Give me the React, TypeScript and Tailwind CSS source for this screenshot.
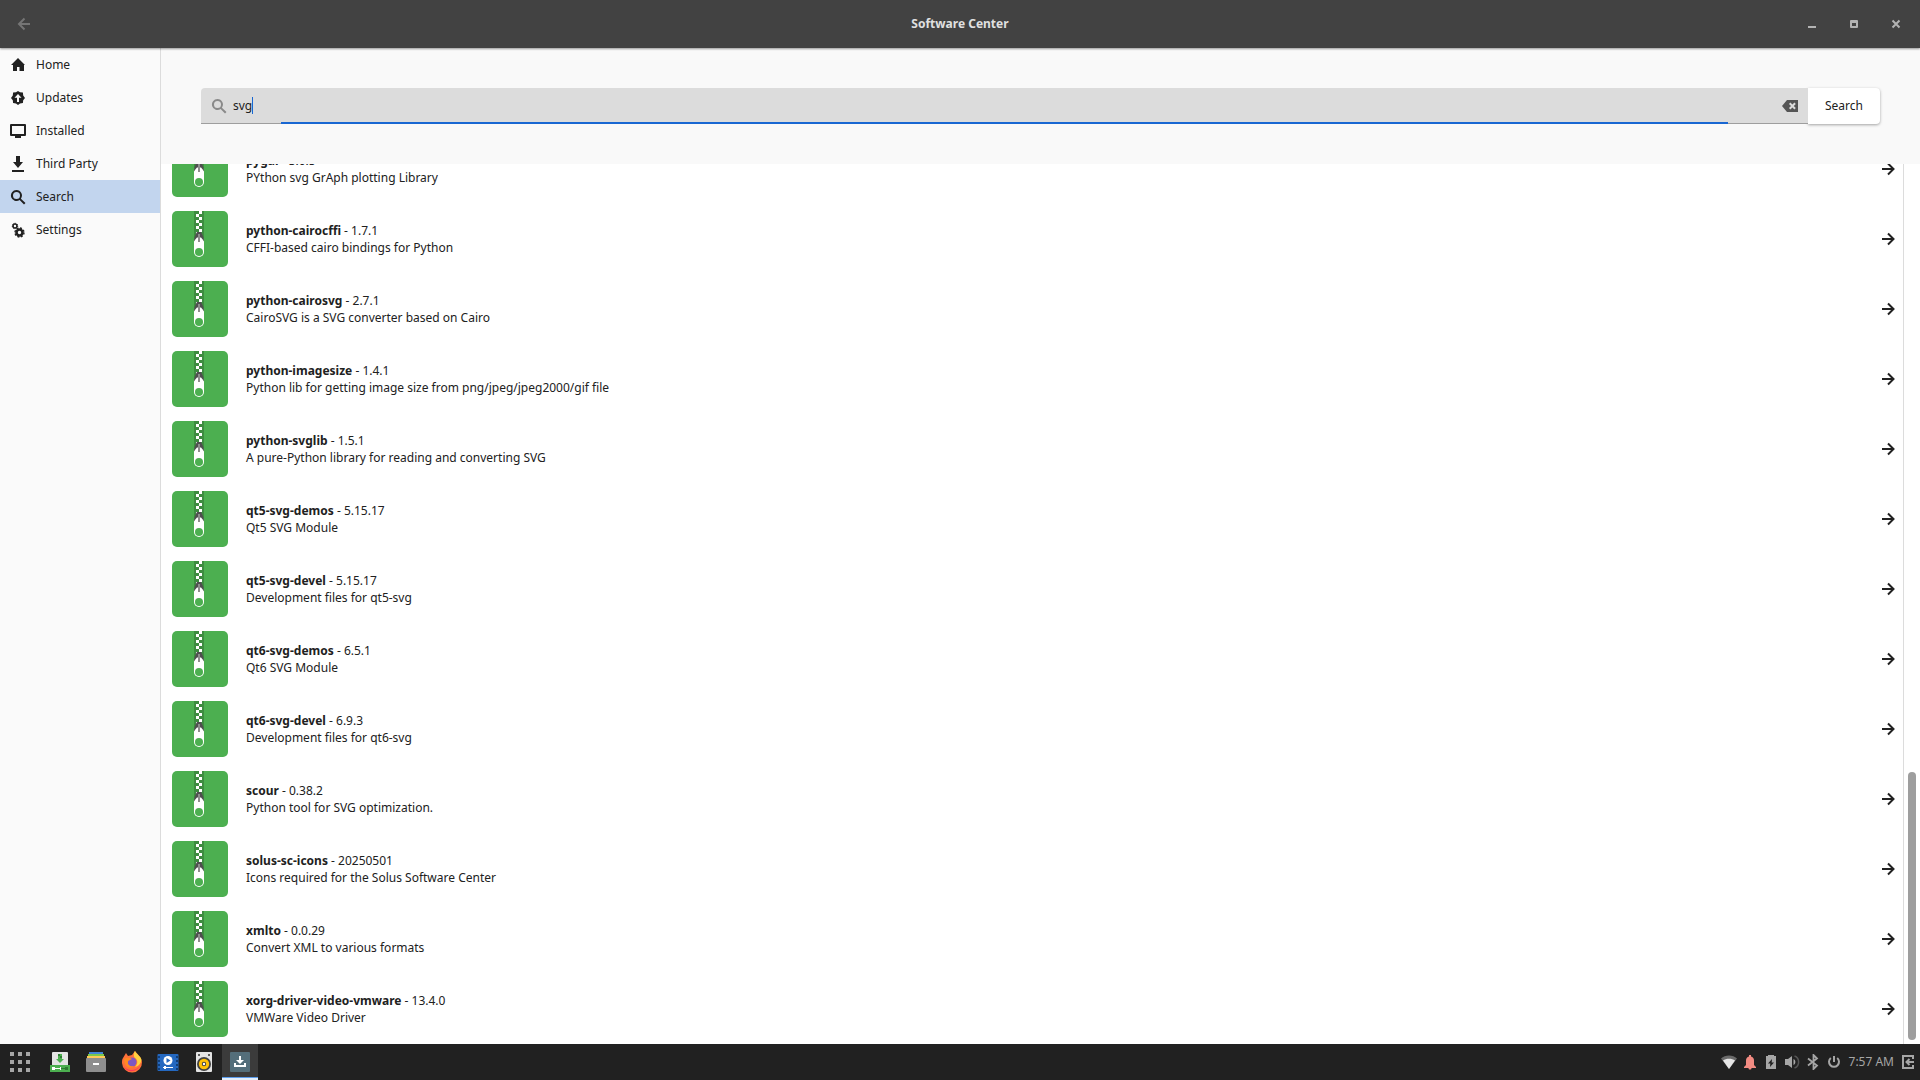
import { useState } from "react";
import type { ReactNode } from "react";

const NAV: { label: string; icon: ReactNode }[] = [
  { label: "Home", icon: <path d="M8 1 1 8h2v6h4v-4h2.5v4H14V8h1z" /> },
  {
    label: "Updates",
    icon: (
      <>
        <path d="M8 1l2 1.3 2.9.3.3 2.8L15 8l-1.8 2.3-.3 2.6-2.9.5L8 15l-2-1.6-2.9-.5-.3-2.6L1 8l1.8-2.6.3-2.8L6 2.3z" />
        <path d="M8 4 4.5 7.8H7V12h2V7.8h2.5z" fill="#fafafa" />
      </>
    ),
  },
  {
    label: "Installed",
    icon: <path fillRule="evenodd" d="M1 1h14a1 1 0 0 1 1 1v10a1 1 0 0 1-1 1h-4v2H5v-2H1a1 1 0 0 1-1-1V2a1 1 0 0 1 1-1zm1 2v8h12V3z" />,
  },
  { label: "Third Party", icon: <path d="M6 0h4v6h3l-5 6-5-6h3zM2 14h12v2H2z" /> },
  {
    label: "Search",
    icon: <path fillRule="evenodd" d="M6.5 1a5.500 5.500 0 0 1 4.400 8.700L15.500 14 14 15.500 9.600 11A5.500 5.500 0 1 1 6.500 1zm0 2a3.500 3.500 0 1 0 0 7 3.500 3.500 0 0 0 0-7z" />,
  },
  {
    label: "Settings",
    icon: (
      <>
        <circle cx="5" cy="4" r="2" fill="none" stroke="currentColor" strokeWidth="1.6" />
        <circle cx="5" cy="4" r="2.7" fill="none" stroke="currentColor" strokeDasharray="1.2 1.2" />
        <circle cx="9.5" cy="10.5" r="3" fill="none" stroke="currentColor" strokeWidth="2.6" />
        <circle cx="9.5" cy="10.5" r="4.5" fill="none" stroke="currentColor" strokeWidth="1.4" strokeDasharray="2 1.53" />
      </>
    ),
  },
];

const PACKAGES = [
  ["pygal", "3.0.5", "PYthon svg GrAph plotting Library"],
  ["python-cairocffi", "1.7.1", "CFFI-based cairo bindings for Python"],
  ["python-cairosvg", "2.7.1", "CairoSVG is a SVG converter based on Cairo"],
  ["python-imagesize", "1.4.1", "Python lib for getting image size from png/jpeg/jpeg2000/gif file"],
  ["python-svglib", "1.5.1", "A pure-Python library for reading and converting SVG"],
  ["qt5-svg-demos", "5.15.17", "Qt5 SVG Module"],
  ["qt5-svg-devel", "5.15.17", "Development files for qt5-svg"],
  ["qt6-svg-demos", "6.5.1", "Qt6 SVG Module"],
  ["qt6-svg-devel", "6.9.3", "Development files for qt6-svg"],
  ["scour", "0.38.2", "Python tool for SVG optimization."],
  ["solus-sc-icons", "20250501", "Icons required for the Solus Software Center"],
  ["xmlto", "0.0.29", "Convert XML to various formats"],
  ["xorg-driver-video-vmware", "13.4.0", "VMWare Video Driver"],
];

function PackageIcon() {
  return (
    <svg viewBox="0 0 56 56" className="size-14 shrink-0">
      <rect width="56" height="56" rx="5" fill="#4caf50" />
      <path d="M22 0h10v27H22z" fill="#3d8c40" />
      <path
        d="M27 0h3v3h-3zM24 3h3v3h-3zM27 6h3v3h-3zM24 9h3v3h-3zM27 12h3v3h-3zM24 15h3v3h-3zM27 18h3v3h-3zM24 21h3v2h-3z"
        fill="#fff"
      />
      <path d="M24 26h6l2 4v11a5 5 0 0 1-10 0V30z" fill="#fff" />
      <path d="M25 21h4c1.5 3 3 5 3 9.5-1-1.5-2-3-3-4h-4c-1 1-2 2.5-3 4 0-4.5 1.5-6.5 3-9.5z" fill="#4f4f4f" />
      <path d="M26 23h2v8h-2z" fill="#8e8e8e" />
      <circle cx="27" cy="41" r="4" fill="#4caf50" />
    </svg>
  );
}

const LAUNCHERS: { label: string; icon: ReactNode }[] = [
  {
    label: "Installer",
    icon: (
      <>
        <path d="M3 0h14a1 1 0 0 1 1 1v13H2V1a1 1 0 0 1 1-1z" fill="#e4e4e4" />
        <path d="M8 2h4v5h2l-4 4-4-4h2z" fill="#4caf50" />
        <path d="M8 2h2v2H8zM10 4h2v2h-2z" fill="#2e7d32" />
        <path d="M0 13h20v7H0z" fill="#4caf50" />
        <path d="M2 15h3v1h5v-1h1v3h-1v-1H5v1H2z" fill="#fff" />
        <path d="M11 16h4v-1h3v3h-3v-1h-4z" fill="#2e7d32" />
      </>
    ),
  },
  {
    label: "Files",
    icon: (
      <>
        <path d="M3 0h14v3H3z" fill="#4285d8" />
        <path d="M2 2h16v3H2z" fill="#7cc84c" />
        <path d="M1 4h18v4H1z" fill="#ffca58" />
        <rect y="6" width="20" height="14" rx="1" fill="#8e8e8e" />
        <path d="M7 11h6v2H7z" fill="#fff" />
      </>
    ),
  },
  {
    label: "Firefox",
    icon: (
      <>
        <path d="M1 6 4 1l2 3 4-1 3-4c2 3 6 5 7 11a10 10 0 0 1-20 1c0-2 0-4 1-5z" fill="#ff7139" />
        <path d="M13-1c-2 3-1 6 0 7 3 2 3 6 0 9 4-1 6-4 6.5-7C19 4 14 2 13-1z" fill="#ffd23f" />
        <circle cx="10" cy="10" r="4.5" fill="#7e57c2" />
        <path d="M2 7c3-2 6-1 8 0-1 1-4 1-4 3-1 3 3 5 6 4-4 4-10 0-10-7z" fill="#ff8a24" />
        <path d="M1 13c3 6 12 7 17 1-2 5-13 9-17-1z" fill="#f9395c" />
      </>
    ),
  },
  {
    label: "Videos",
    icon: (
      <>
        <rect y="2" x="-.5" width="21" height="17" rx="1" fill="#2468c0" />
        <path d="M0 4h2v2H0zM0 8h2v2H0zM0 12h2v2H0zM0 16h2v2H0zM18 4h2v2h-2zM18 8h2v2h-2zM18 12h2v2h-2zM18 16h2v2h-2z" fill="#123f78" />
        <circle cx="10" cy="8.5" r="4.5" fill="#fff" />
        <path d="M8.5 6v5l4-2.5z" fill="#2468c0" />
        <path d="M5 15h1v-1h2v1h7v1H8v1H6v-1H5z" fill="#fff" />
      </>
    ),
  },
  {
    label: "Music",
    icon: (
      <>
        <rect x="2" width="16" height="20" rx="1" fill="#e4e4e4" />
        <path d="M4 2h2v2H4zM14 2h2v2h-2z" fill="#5c5c5c" />
        <circle cx="10" cy="12" r="7" fill="#424242" />
        <circle cx="10" cy="12" r="3.7" fill="none" stroke="#ffc107" strokeWidth="3" />
        <circle cx="10" cy="12" r="1.2" fill="#fff" />
      </>
    ),
  },
  {
    label: "Software Center",
    icon: (
      <>
        <rect width="20" height="20" rx="1" fill="#546e7a" />
        <path d="M9 4h2v4h3l-4 4-4-4h3zM4 11h2v2h8v-2h2v4H4z" fill="#fff" />
      </>
    ),
  },
];

const TRAY: { label: string; icon: ReactNode }[] = [
  {
    label: "Network",
    icon: (
      <>
        <path d="M8 15 0 4.5C4 .5 12 .5 16 4.5z" fill="#6b6b6b" />
        <path d="M8 15 2 6.5c3-2.5 9-2.5 12 0z" fill="#e6e6e6" />
      </>
    ),
  },
  {
    label: "Notifications",
    icon: <path d="M7 1h2v1.5c2 .5 3 2 3 4V11l2 2v1H2v-1l2-2V6.5c0-2 1-3.5 3-4zM6.5 14h3c0 1-.5 1.5-1.5 1.5S6.5 15 6.5 14z" fill="#f28b82" />,
  },
  {
    label: "Battery",
    icon: <path fillRule="evenodd" d="M5 1h6v1h2v13H3V2h2zm4 4L5 9.5h2.3L7 13l4-4.5H8.7z" />,
  },
  {
    label: "Volume",
    icon: (
      <>
        <path d="M1 5h3l4-3v12l-4-3H1zM9.5 5c2.5 1 2.5 5 0 6z" />
        <path d="M10.5 2c5.500 2 5.500 10 0 12" fill="none" stroke="#555" strokeWidth="1.5" />
      </>
    ),
  },
  {
    label: "Bluetooth",
    icon: <path d="m3 4.5 9 7L8.5 15V1L12 4.5l-9 7" fill="none" stroke="currentColor" strokeWidth="1.8" />,
  },
  {
    label: "Power",
    icon: <path d="M8 2v6M4.8 4a5 5 0 1 0 6.4 0" fill="none" stroke="currentColor" strokeWidth="2" />,
  },
];

function Icon({ children, className = "size-4" }: { children: ReactNode; className?: string }) {
  return (
    <svg viewBox="0 0 16 16" fill="currentColor" aria-hidden="true" className={`shrink-0 ${className}`}>
      {children}
    </svg>
  );
}

export default function App() {
  const [query, setQuery] = useState("svg");
  const [page, setPage] = useState("Search");

  return (
    <div className="flex h-screen flex-col overflow-hidden bg-white font-['Noto_Sans',sans-serif] text-xs text-[#212121]">
      <header className="relative z-10 grid h-12 shrink-0 grid-cols-3 items-center bg-[#424242] px-4 text-[#b3b3b3] shadow-[0_1px_2px_rgba(0,0,0,0.4)]">
        <button aria-label="Back" className="justify-self-start text-[#757575]">
          <Icon>
            <path d="M8.5 2.5 3 8l5.5 5.5M3 8h11" fill="none" stroke="currentColor" strokeWidth="2" />
          </Icon>
        </button>
        <h1 className="text-center font-bold text-[#e0e0e0]">Software Center</h1>
        <div className="flex justify-end gap-[26px]">
          <button aria-label="Minimize">
            <Icon><path d="M4 10h8v2H4z" /></Icon>
          </button>
          <button aria-label="Maximize">
            <Icon><path fillRule="evenodd" d="M5 4h6a1 1 0 0 1 1 1v6a1 1 0 0 1-1 1H5a1 1 0 0 1-1-1V5a1 1 0 0 1 1-1zm1 3v3h4V7z" /></Icon>
          </button>
          <button aria-label="Close">
            <Icon><path d="m4.5 4.5 7 7m0-7-7 7" stroke="currentColor" strokeWidth="2" /></Icon>
          </button>
        </div>
      </header>

      <div className="flex min-h-0 flex-1">
        <nav className="w-[161px] shrink-0 border-r border-[#dcdcdc] bg-[#fafafa]">
          {NAV.map((item) => (
            <button
              key={item.label}
              onClick={() => setPage(item.label)}
              className={`flex h-[33px] w-full items-center gap-2.5 px-2.5 ${page === item.label ? "bg-[#c2d5ee]" : ""}`}
            >
              <Icon>{item.icon}</Icon>
              {item.label}
            </button>
          ))}
        </nav>

        <main className="flex min-w-0 flex-1 flex-col">
          <div className="flex shrink-0 bg-[#f9f9f9] p-10">
            <div className="relative flex h-9 flex-1 items-center rounded-tl border-b border-[#9e9e9e] bg-[#dcdcdc] px-2.5">
              <Icon className="size-4 text-[#8a8a8a]">{NAV[4].icon}</Icon>
              <input
                aria-label="Search packages"
                value={query}
                onChange={(e) => setQuery(e.target.value)}
                className="field-sizing-content ml-1.5 outline-none"
              />
              <span className="h-[17px] w-px bg-[#1967d2]" />
              <button aria-label="Clear" className="ml-auto text-[#555555]" onClick={() => setQuery("")}>
                <Icon>
                  <path fillRule="evenodd" d="M5 2h11v12H5L0 8zM7 6l2 2-2 2 1.4 1.4 2-2 2 2L13.8 10l-2-2 2-2-1.4-1.4-2 2-2-2z" />
                </Icon>
              </button>
              <span className="absolute inset-x-20 -bottom-px h-0.5 bg-[#1967d2]" />
            </div>
            <button className="h-9 w-[72px] rounded-r bg-white shadow-[0_1px_3px_rgba(0,0,0,0.35)]">Search</button>
          </div>

          <div className="flex min-h-0 flex-1">
            {/* scrolled to the end, so the first row runs under the search bar */}
            <ul className="flex min-w-0 flex-1 flex-col justify-end overflow-hidden border-r border-[#dcdcdc]">
              {PACKAGES.map(([name, version, summary]) => (
                <li key={name} className="flex h-[70px] shrink-0 items-center pr-[7px] pl-[11px]">
                  <PackageIcon />
                  <p className="ml-[18px] flex-1 leading-[17px]">
                    <strong>{name}</strong> - {version}
                    <br />
                    {summary}
                  </p>
                  <button aria-label={`Open ${name}`}>
                    <Icon>
                      <path d="M8 2.5 13.5 8 8 13.5M2 8h11" fill="none" stroke="currentColor" strokeWidth="2" />
                    </Icon>
                  </button>
                </li>
              ))}
            </ul>
            <div className="flex w-4 shrink-0 flex-col justify-end p-1">
              <div className="h-[268px] rounded-full bg-[#9e9e9e]" />
            </div>
          </div>
        </main>
      </div>

      <footer className="flex h-9 shrink-0 items-center bg-[#212121] text-[#a6a6a6]">
        <button aria-label="Applications" className="mr-0.5 flex w-10 justify-center">
          <svg viewBox="0 0 20 20" className="size-5" fill="currentColor">
            <path d="M0 0h4v4H0zM8 0h4v4H8zM16 0h4v4h-4zM0 8h4v4H0zM8 8h4v4H8zM16 8h4v4h-4zM0 16h4v4H0zM8 16h4v4H8zM16 16h4v4h-4z" />
          </svg>
        </button>
        {LAUNCHERS.map((app) => (
          <button
            key={app.label}
            aria-label={app.label}
            className={`flex h-9 w-9 items-center justify-center ${
              app.label === "Software Center" ? "bg-[#3b3b3b] shadow-[inset_0_-2px_#e3f0fd,inset_0_-3px_#5c9ded]" : ""
            }`}
          >
            <svg viewBox="0 0 20 20" className="size-5 overflow-visible">{app.icon}</svg>
          </button>
        ))}
        <div className="ml-auto flex items-center pr-1">
          {TRAY.map((item) => (
            <button key={item.label} aria-label={item.label} className="flex w-[21px] justify-center">
              <Icon>{item.icon}</Icon>
            </button>
          ))}
          <time className="mr-1.5 ml-1">7:57 AM</time>
          <button aria-label="Log out">
            <Icon>
              <path d="M13 5V2H3v12h10v-3M14 8H6M9.500 5l-3 3 3 3" fill="none" stroke="currentColor" strokeWidth="2" />
            </Icon>
          </button>
        </div>
      </footer>
    </div>
  );
}
